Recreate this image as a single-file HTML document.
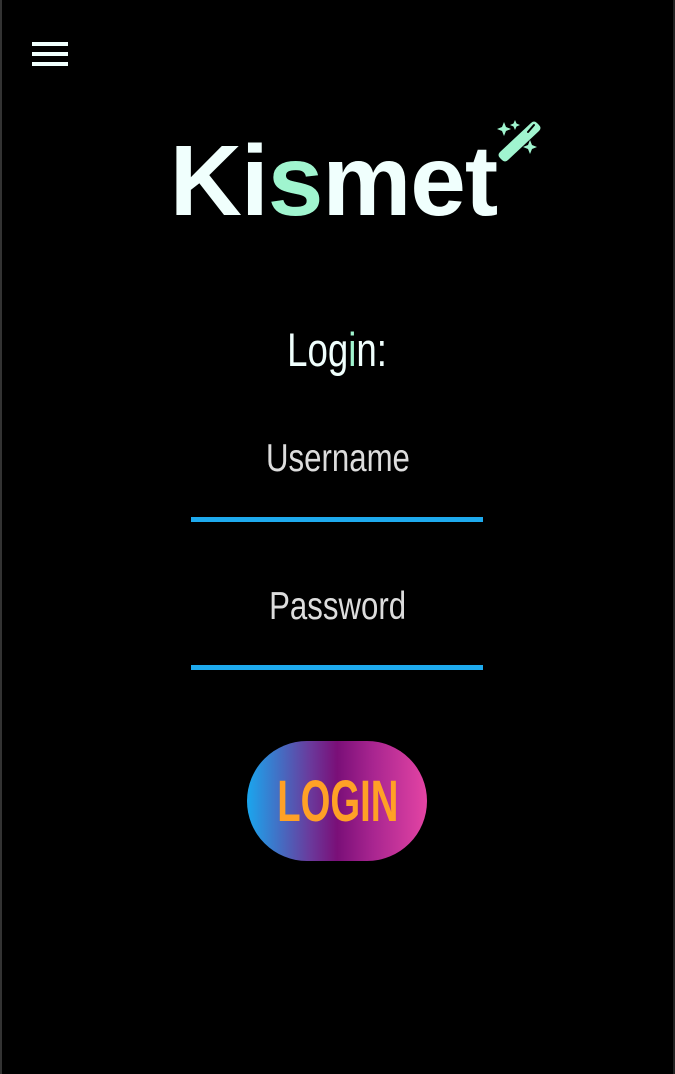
<!DOCTYPE html>
<html><head><meta charset="utf-8"><style>
html,body{margin:0;padding:0;background:#000;width:675px;height:1074px;overflow:hidden;position:relative;font-family:"Liberation Sans",sans-serif}
.bl{position:absolute;left:0;top:0;width:2px;height:1074px;background:#333}
.br{position:absolute;right:0;top:0;width:2px;height:1074px;background:#222}
.hb{position:absolute;left:32px;width:36px;height:4px;background:#f0fffd}
.c{position:absolute;left:0;width:675px;text-align:center;white-space:nowrap}
.c span{display:inline-block}
.ul{position:absolute;left:191px;width:292px;height:5px;background:#1eaaee}
.btn{position:absolute;left:247px;top:741px;width:180px;height:120px;border-radius:60px;background:linear-gradient(90deg,#1aa6ee 0%,#6a3a9c 35%,#7a0f78 50%,#a82590 70%,#e444a4 100%)}
</style></head><body>
<div class="bl"></div><div class="br"></div>
<div class="hb" style="top:42px"></div><div class="hb" style="top:52px"></div><div class="hb" style="top:62px"></div>
<div class="c" style="top:121px;left:-4px;font-size:100px;font-weight:bold;color:#f0fffd;letter-spacing:-1px;line-height:120px"><span>Ki<span style="color:#a0f5cf">s</span>met</span></div>
<svg style="position:absolute;left:494px;top:120px" width="48" height="42" viewBox="0 0 48 42">
<g fill="#a0f5cf">
<path d="M37 3 Q40 0 43 3 L45 5 Q48 8 45 11 L14 40 Q11 43 8 40 L6 38 Q3 35 6 32 Z"/>
<path d="M10 2 L12 7 L17 9 L12 11 L10 16 L8 11 L3 9 L8 7 Z"/>
<path d="M21 0 L22.5 3.5 L26 5 L22.5 6.5 L21 10 L19.5 6.5 L16 5 L19.5 3.5 Z"/>
<path d="M36 20 L38 25 L43 27 L38 29 L36 34 L34 29 L29 27 L34 25 Z"/>
</g>
<path d="M40 5 L34 12" stroke="#000" stroke-width="2" stroke-linecap="round"/>
</svg>
<div class="c" style="top:322px;font-size:47px;color:#f0fffd;line-height:56px"><span style="transform:scaleX(0.78)">Log<span style="color:#a0f5cf">i</span>n:</span></div>
<div class="c" style="top:436px;font-size:39px;color:#ddd;line-height:46px"><span style="transform:scaleX(0.8)">Username</span></div>
<div class="ul" style="top:517px"></div>
<div class="c" style="top:584px;font-size:39px;color:#ddd;line-height:46px"><span style="transform:scaleX(0.8)">Password</span></div>
<div class="ul" style="top:665px"></div>
<div class="btn"></div>
<div class="c" style="top:767px;font-size:58px;color:#ffa126;line-height:70px;font-weight:bold"><span style="transform:scaleX(0.66)">LOGIN</span></div>
</body></html>
